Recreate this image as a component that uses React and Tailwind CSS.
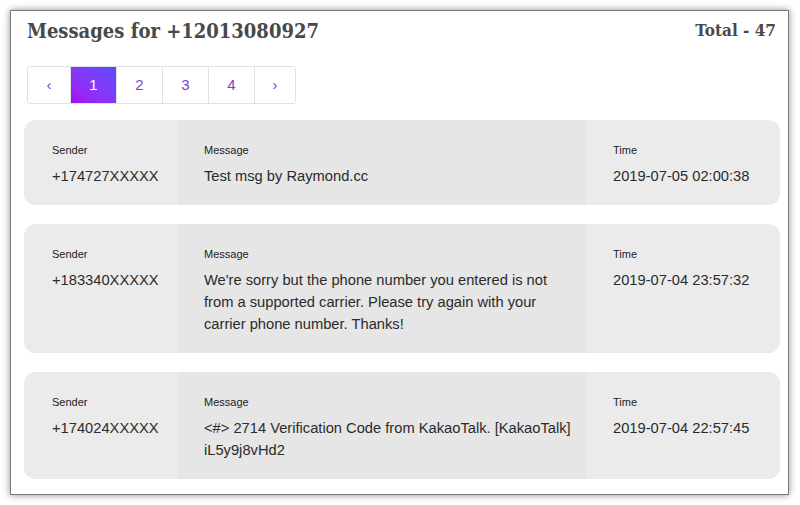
import React from "react";

const messages = [
  { sender: "+174727XXXXX", message: "Test msg by Raymond.cc", time: "2019-07-05 02:00:38" },
  {
    sender: "+183340XXXXX",
    message:
      "We're sorry but the phone number you entered is not from a supported carrier. Please try again with your carrier phone number. Thanks!",
    time: "2019-07-04 23:57:32",
  },
  {
    sender: "+174024XXXXX",
    message: "<#> 2714 Verification Code from KakaoTalk. [KakaoTalk] iL5y9j8vHd2",
    time: "2019-07-04 22:57:45",
  },
];

function Cell({ label, value, className }) {
  return (
    <div className={"pt-[23px] pb-[18px] " + className}>
      <div className="text-[11px] leading-[14px] text-[#222]">{label}</div>
      <div className="mt-[8px] text-[14.7px] leading-[22px] text-[#2b2b2b]">{value}</div>
    </div>
  );
}

export default function App() {
  const pages = ["‹", "1", "2", "3", "4", "›"];
  return (
    <div className="w-[800px] h-[505px] bg-white p-[10px] font-['Liberation_Sans',Arial,sans-serif]">
      <div className="w-[779px] h-[485px] bg-white border border-[#7a7a7a] shadow-[0_0_7px_rgba(0,0,0,0.45)] pl-[13px] pr-[8px] pt-[6px]">
        <div className="flex items-center justify-between pl-[3px] pr-[4px] h-[28px] font-['DejaVu_Serif_Condensed','DejaVu_Serif',serif] font-bold text-[#484848]">
          <div className="text-[20px] tracking-[0px]">Messages for +12013080927</div>
          <div className="text-[17px] tracking-[0px]">Total - 47</div>
        </div>
        <div className="ml-[3px] mt-[21px] flex h-[38px] w-max rounded-[3px] border border-[#dee2e6] overflow-hidden">
          {pages.map((p, i) => {
            const active = p === "1";
            const w = i === 0 ? "w-[42px]" : i === 5 ? "w-[41px]" : "w-[46px]";
            return (
              <div
                key={i}
                className={
                  "flex items-center justify-center text-[15px] " +
                  w +
                  " " +
                  (i > 0 ? "border-l border-[#dee2e6] " : "") +
                  (active
                    ? "bg-linear-to-tr from-[#a500f0] to-[#5a4cff] text-white"
                    : "text-[#7b44c6] bg-white")
                }
              >
                {p}
              </div>
            );
          })}
        </div>
        <div className="mt-[16px] flex flex-col gap-[19px]">
          {messages.map((m, i) => (
            <div
              key={i}
              className="grid grid-cols-[154px_408px_1fr] rounded-[12px] overflow-hidden bg-[#ebebeb]"
            >
              <Cell label="Sender" value={m.sender} className="pl-[28px] bg-[#ebebeb]" />
              <Cell label="Message" value={m.message} className="pl-[26px] pr-[8px] bg-[#e6e6e6]" />
              <Cell label="Time" value={m.time} className="pl-[27px] bg-[#ebebeb]" />
            </div>
          ))}
        </div>
      </div>
    </div>
  );
}
